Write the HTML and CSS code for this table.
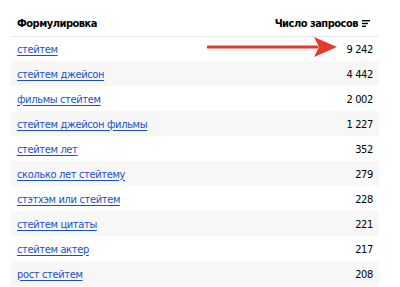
FILE: index.html
```html
<!DOCTYPE html>
<html lang="ru">
<head>
<meta charset="utf-8">
<link rel="stylesheet" href="styles.css">
</head>
<body>
<div class="wrap">
  <table class="tbl">
    <thead>
      <tr>
        <th class="c-phrase">Формулировка</th>
        <th class="c-num"><span class="sort">Число запросов<svg class="sort-ic" width="8" height="7" viewBox="0 0 8 7"><rect x="0" y="0" width="8" height="1.4" fill="#000"/><rect x="0" y="2.8" width="6" height="1.4" fill="#000"/><rect x="0" y="5.6" width="4" height="1.4" fill="#000"/></svg></span></th>
      </tr>
    </thead>
    <tbody>
      <tr><td><a href="#">стейтем</a></td><td class="num">9 242</td></tr>
      <tr><td><a href="#">стейтем джейсон</a></td><td class="num">4 442</td></tr>
      <tr><td><a href="#">фильмы стейтем</a></td><td class="num">2 002</td></tr>
      <tr><td><a href="#">стейтем джейсон фильмы</a></td><td class="num">1 227</td></tr>
      <tr><td><a href="#">стейтем лет</a></td><td class="num">352</td></tr>
      <tr><td><a href="#">сколько лет стейтему</a></td><td class="num">279</td></tr>
      <tr><td><a href="#">стэтхэм или стейтем</a></td><td class="num">228</td></tr>
      <tr><td><a href="#">стейтем цитаты</a></td><td class="num">221</td></tr>
      <tr><td><a href="#">стейтем актер</a></td><td class="num">217</td></tr>
      <tr><td><a href="#">рост стейтем</a></td><td class="num">208</td></tr>
    </tbody>
  </table>
  <svg class="arrow" width="132" height="22" viewBox="0 0 132 22">
    <line x1="1" y1="10" x2="110" y2="10" stroke="#e53a2c" stroke-width="3" stroke-linecap="round"/>
    <polygon points="107,0 130,10 107,20 112,10" fill="#e53a2c"/>
  </svg>
</div>
</body>
</html>
```
FILE: styles.css
```css
html, body {
  margin: 0;
  padding: 0;
  background: #fff;
}
body {
  font-family: "DejaVu Sans Condensed", "DejaVu Sans", sans-serif;
  font-stretch: condensed;
  font-size: 11px;
  letter-spacing: -0.35px;
  color: #000;
}
.wrap {
  position: relative;
  padding: 0 21px 0 11px;
}
.tbl {
  width: 368px;
  border-collapse: collapse;
}
.tbl th {
  height: 36px;
  padding: 0 6px;
  font-weight: 700;
  font-size: 11px;
  letter-spacing: -0.5px;
  text-align: left;
  vertical-align: middle;
  border-bottom: 1px solid #e6e6e6;
  box-sizing: border-box;
  padding-top: 12px;
}
.tbl th.c-num {
  text-align: right;
  padding-right: 9px;
}
.sort {
  display: inline-flex;
  align-items: center;
  gap: 4px;
}
.sort-ic {
  display: block;
}
.tbl td {
  height: 25px;
  padding: 0 6px;
  padding-top: 1px;
  vertical-align: middle;
  box-sizing: border-box;
}
.tbl tbody tr:nth-child(even) td {
  background: #f7f7f7;
}
.tbl a {
  color: #1a4fc7;
  text-decoration: underline;
  text-underline-offset: 2px;
}
.num {
  text-align: right;
}
.arrow {
  position: absolute;
  left: 207px;
  top: 37px;
}
```
